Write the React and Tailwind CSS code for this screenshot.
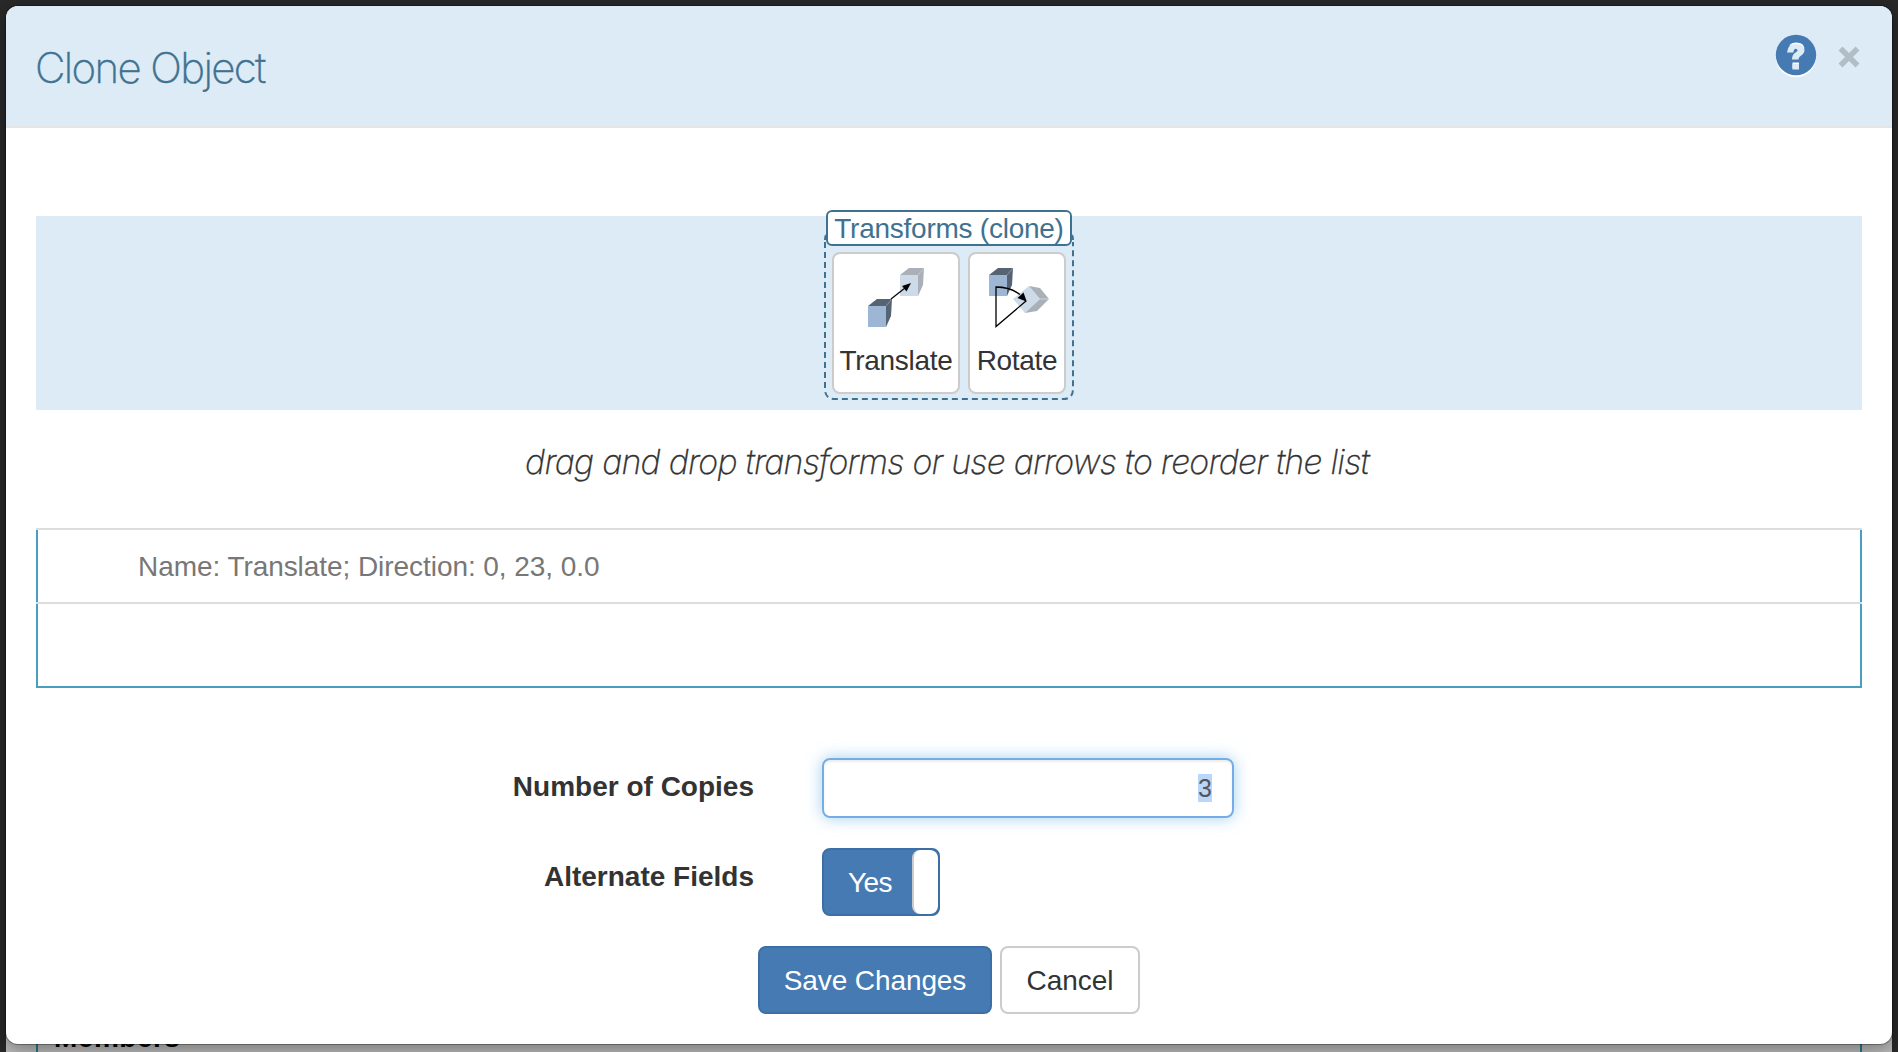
import React from "react";

const Cube = ({ faded }) => (
  <g opacity={faded ? 0.5 : 1}>
    <polygon points="0,7 9,0 24,0 18,7" fill="#566373" />
    <polygon points="18,7 24,0 23,17 18,28" fill="#566373" />
    <polygon points="0,7 18,7 18,28 0,28" fill="#9db6d3" />
    <path d="M18 7 24 0" stroke="#8494a8" strokeWidth="0.6" />
  </g>
);

function TranslateIcon() {
  return (
    <svg width="60" height="60" viewBox="0 0 60 60">
      <g transform="translate(34,0)"><Cube faded /></g>
      <g transform="translate(2,31)"><Cube /></g>
      <path d="M25 31 39 20" stroke="#000" strokeWidth="1.2" />
      <polygon points="45,15 40.5,23.5 36,18" fill="#000" />
    </svg>
  );
}

function RotateIcon() {
  return (
    <svg width="60" height="60" viewBox="0 0 60 60" className="overflow-visible">
      <g transform="translate(2,0)"><Cube /></g>
      <g opacity="0.5">
        <polygon points="26,31 42,18 53,31 38,45" fill="#9db6d3" />
        <polygon points="42,18 53,20 62,31 53,31" fill="#566373" />
        <polygon points="53,31 62,31 50,43 38,45" fill="#566373" />
        <path d="M53 31h9" stroke="#fff" strokeWidth="0.5" />
      </g>
      <path d="M39 33 9 58.500V19q14 0 24 7.500" fill="none" stroke="#000" strokeWidth="1.3" />
      <polygon points="39.800,33.800 30.500,30 36.500,24.500" fill="#000" />
    </svg>
  );
}

function TransformCard({ label, width, children }) {
  return (
    <button className={`flex h-[142px] flex-col items-center rounded-lg border-2 border-[#ccc] bg-white pt-3.5 text-[28px] leading-10 text-[#333] ${width}`}>
      {children}
      <span className="mt-[13px] whitespace-nowrap tracking-[-0.3px]">{label}</span>
    </button>
  );
}

export default function App() {
  return (
    <div className="relative h-[1052px] w-[1898px] overflow-hidden bg-[#292929] px-1.5 pt-1.5 font-['Liberation_Sans',Arial,sans-serif] text-[28px] text-[#333]">
      <div className="absolute bottom-0 left-1.5 h-10 w-[1886px] bg-[#bdbdbd] px-[30px]">
        <div className="h-full border-x-2 border-[#2f7590] pl-4 pt-2.5 text-[28px] leading-8 font-bold tracking-[0.5px] text-black">Members</div>
      </div>

      <main className="relative h-[1038px] w-[1886px] overflow-hidden rounded-xl bg-white shadow-[0_0_0_1px_rgba(0,0,0,0.3),0_5px_20px_rgba(0,0,0,0.4)]">
        <header className="flex h-[122px] items-start justify-between border-b-2 border-[#e5e5e5] bg-[#ddebf6] pr-8 pl-[29px]">
          <h1 className="pt-[37px] font-['Inter',sans-serif] text-[42px] leading-[50px] font-extralight tracking-[-1.65px] text-[#3f7290] [-webkit-text-stroke:0.4px_#3f7290]">Clone Object</h1>
          <div className="flex items-start gap-[21px] pt-7">
            <svg width="42" height="44" viewBox="0 0 42 44">
              <circle cx="21" cy="23" r="20.200" fill="#fff" />
              <circle cx="21" cy="21" r="20.200" fill="#467ab2" />
              <path d="M12 18.500q1-9.500 9.500-9.500 8 0 8 7 0 3.500-4 6-2 1.200-2 3.500h-6.500q0-5 3.500-7 2-1 2-2.300 0-1.500-1.700-1.500-2 0-2.500 3.800z" fill="#ddebf6" />
              <path d="M14 11.500q2.500-3 7.500-3 7 0 8 6-2-4.500-8-4.500-4.500 0-7.500 1.500zM17.500 28.500h6.500v6h-6.500z" fill="#fff" />
              <path d="M17.500 30h6.500v5.500h-6.500z" fill="#ddebf6" />
            </svg>
            <svg width="22" height="22" viewBox="0 0 22 22" className="mt-3">
              <path d="M2.500 2.500 19.500 19.500M19.500 2.500 2.500 19.500" stroke="#b2bec5" strokeWidth="5.600" />
            </svg>
          </div>
        </header>

        <section className="mx-[30px] mt-[88px] flex h-[194px] justify-center bg-[#ddebf6]">
          <div className="relative -mt-1.5 flex w-[250px] flex-col items-center">
            <svg className="absolute left-0 top-0" width="250" height="190" viewBox="0 0 250 190">
              <path d="M1 32V179q0 10 10 10H239q10 0 10-10V32" fill="none" stroke="#3f7290" strokeWidth="2" strokeDasharray="6 4" />
              <path d="M1 30q0-3 1-5M249 30q0-3-1-5" fill="none" stroke="#3f7290" strokeWidth="2" />
            </svg>
            <div className="relative h-9 w-[246px] rounded-md border-2 border-[#3f7290] bg-white text-center leading-[34px] tracking-[-0.25px] whitespace-nowrap text-[#3f7290]">Transforms (clone)</div>
            <div className="relative mt-1.5 flex gap-2">
              <TransformCard label="Translate" width="w-32"><TranslateIcon /></TransformCard>
              <TransformCard label="Rotate" width="w-[98px]"><RotateIcon /></TransformCard>
            </div>
          </div>
        </section>

        <p className="mt-7 pr-1 text-center font-['Inter',sans-serif] text-[34px] leading-12 font-extralight tracking-[-0.8px] italic [-webkit-text-stroke:0.3px_#333]">drag and drop transforms or use arrows to reorder the list</p>

        <section className="mx-[30px] mt-[42px]">
          <div className="h-0.5 bg-[#ddd]" />
          <div className="flex h-[72px] items-center border-x-2 border-[#4a9fc0] pt-0.5 pl-[100px] tracking-[-0.06px] text-[#777]">Name: Translate; Direction: 0, 23, 0.0</div>
          <div className="h-0.5 bg-[#ddd]" />
          <div className="h-[84px] border-x-2 border-b-2 border-[#4a9fc0]" />
        </section>

        <form className="mt-[70px]" onSubmit={(e) => e.preventDefault()}>
          <div className="flex h-[60px]">
            <label className="w-[748px] pt-[11px] text-right leading-9 font-bold">Number of Copies</label>
            <div className="ml-[68px] flex w-[412px] items-center justify-end rounded-lg border-2 border-[#74ade5] pr-5 text-[25px] text-[#555] shadow-[inset_0_2px_2px_rgba(0,0,0,0.075),0_0_16px_rgba(102,175,233,0.6)]">
              <span className="bg-[#b9d6fb] leading-7">3</span>
            </div>
          </div>
          <div className="mt-[30px] flex h-[68px]">
            <label className="w-[748px] pt-[11px] text-right leading-9 font-bold">Alternate Fields</label>
            <button className="ml-[68px] flex w-[118px] overflow-hidden rounded-lg border-2 border-[#3c6fa5] bg-[#467ab2] text-white">
              <span className="w-[88px] pl-1 text-center leading-[66px] tracking-[-0.6px]">Yes</span>
              <span className="h-full w-[26px] rounded-lg border-l-2 border-[#ccc] bg-white" />
            </button>
          </div>
          <div className="mt-[30px] flex gap-2 pl-[752px]">
            <button className="h-[68px] w-[234px] rounded-lg border-2 border-[#3c6fa5] bg-[#467ab2] pt-0.5 tracking-[-0.1px] text-white">Save Changes</button>
            <button className="h-[68px] w-[140px] rounded-lg border-2 border-[#ccc] bg-white pt-0.5">Cancel</button>
          </div>
        </form>
      </main>
    </div>
  );
}
